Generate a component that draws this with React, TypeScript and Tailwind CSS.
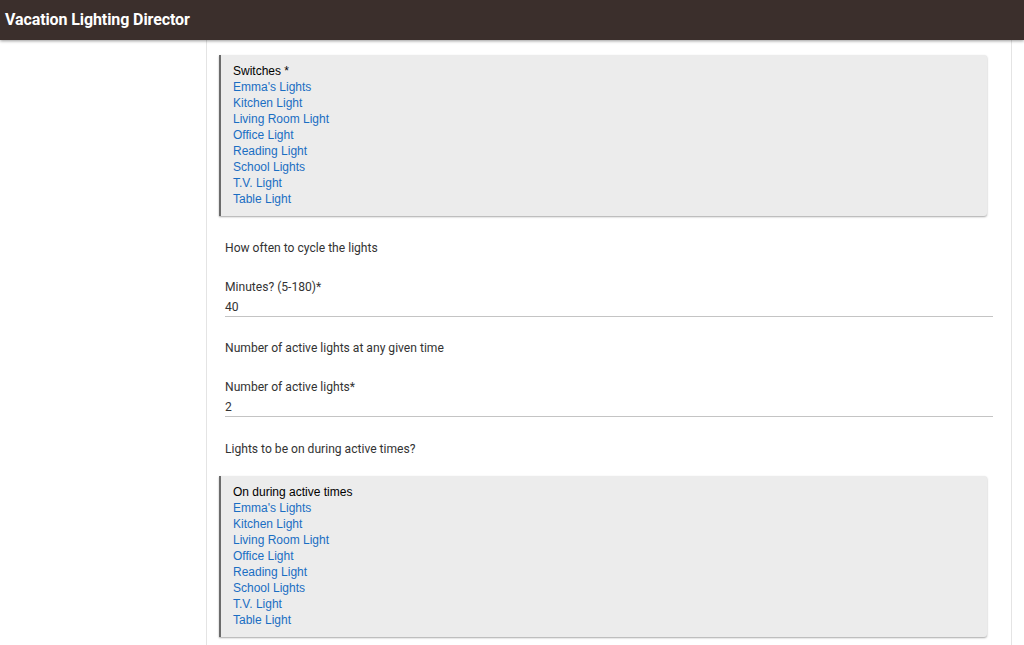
const lights = [
  "Emma's Lights",
  "Kitchen Light",
  "Living Room Light",
  "Office Light",
  "Reading Light",
  "School Lights",
  "T.V. Light",
  "Table Light",
];

const DeviceBox = ({ title }: { title: string }) => (
  <div className="ml-[12px] mr-[24px] bg-[#ececec] border-l-2 border-[#6b6b6b] pl-[12px] pt-[8px] pb-[9px] rounded-r-[3px] shadow-[0_1px_2px_rgba(0,0,0,0.35)] font-['Liberation_Sans',Arial,sans-serif] text-[12px] leading-[16px]">
    <div className="text-black">{title}</div>
    {lights.map((l) => (
      <div key={l} className="text-[#1a6ec3]">
        {l}
      </div>
    ))}
  </div>
);

const Paragraph = ({ text }: { text: string }) => (
  <div className="px-[18px] text-[12.1px] leading-[16px] text-[#333]">{text}</div>
);

const NumberField = ({ label, value }: { label: string; value: string }) => (
  <div className="ml-[18px] mr-[18px] text-[12.1px] leading-[16px] text-[#333]">
    <div>{label}</div>
    <div className="mt-[4px] pb-[1px] border-b border-[#c4c4c4]">{value}</div>
  </div>
);

export default function App() {
  return (
    <div className="min-h-[645px] bg-white font-['Roboto',sans-serif]">
      <div className="h-[40px] bg-[#3b2f2c] flex items-center px-[5px] shadow-[0_1px_3px_rgba(0,0,0,0.4)] relative z-10">
        <span className="text-white font-bold text-[16px] tracking-[-0.1px]">
          Vacation Lighting Director
        </span>
      </div>
      <div className="flex">
        <div className="w-[206px] shrink-0" />
        <div className="w-[806px] border-l border-r border-[#e4e4e4] min-h-[605px] pt-[15px]">
          <DeviceBox title="Switches *" />
          <div className="h-[24px]" />
          <Paragraph text="How often to cycle the lights" />
          <div className="h-[23px]" />
          <NumberField label="Minutes? (5-180)*" value="40" />
          <div className="h-[23px]" />
          <Paragraph text="Number of active lights at any given time" />
          <div className="h-[23px]" />
          <NumberField label="Number of active lights*" value="2" />
          <div className="h-[24px]" />
          <Paragraph text="Lights to be on during active times?" />
          <div className="h-[19px]" />
          <DeviceBox title="On during active times" />
        </div>
      </div>
    </div>
  );
}
